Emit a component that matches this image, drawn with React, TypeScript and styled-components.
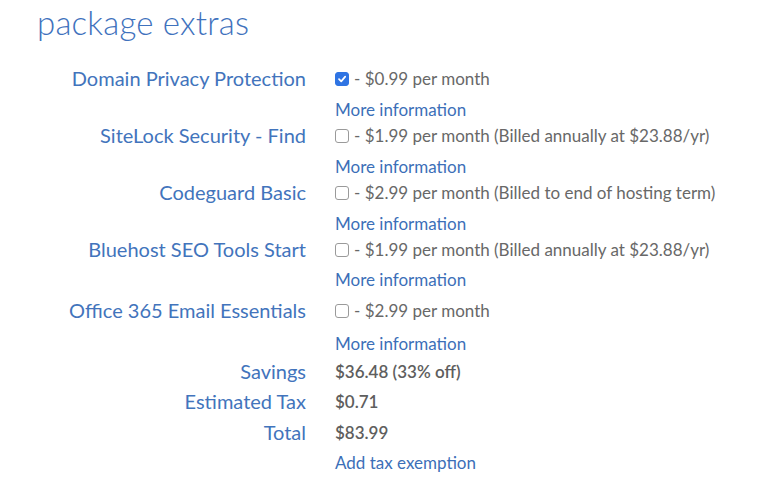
import React from "react";
import styled, { createGlobalStyle } from "styled-components";

const Global = createGlobalStyle`
  html, body { margin: 0; padding: 0; background: #ffffff; }
  body { font-family: "Lato", "Open Sans", sans-serif; }
`;

const Page = styled.div`
  width: 774px;
  height: 490px;
  overflow: hidden;
  padding: 1px 0 0 37px;
  box-sizing: border-box;
`;

const Title = styled.h2`
  margin: 0;
  font-size: 33px;
  font-weight: 300;
  color: #3f72bd;
  line-height: 42px;
  letter-spacing: 0.2px;
`;

const Grid = styled.div`
  display: grid;
  grid-template-columns: 269px auto;
  column-gap: 29px;
  margin-top: 20px;
`;

const Label = styled.div<{ $h: number }>`
  height: ${(p) => p.$h}px;
  line-height: ${(p) => p.$h}px;
  text-align: right;
  font-size: 20px;
  font-weight: 400;
  color: #4274bc;
  white-space: nowrap;
`;

const Value = styled.div<{ $h: number; $pad?: number }>`
  height: ${(p) => p.$h}px;
  box-sizing: border-box;
  padding-top: ${(p) => p.$pad ?? 0}px;
  display: flex;
  align-items: center;
  font-size: 17px;
  color: #686868;
  white-space: nowrap;
`;

const Box = styled.span<{ $checked?: boolean }>`
  width: 14px;
  height: 14px;
  box-sizing: border-box;
  border-radius: 3px;
  border: 1px solid ${(p) => (p.$checked ? "#2f74e3" : "#9a9a9a")};
  background: ${(p) => (p.$checked ? "#2f74e3" : "#fff")};
  display: inline-flex;
  align-items: center;
  justify-content: center;
  margin-right: 5px;
  margin-top: 2px;
`;

const Link = styled.a`
  font-size: 17px;
  color: #3c6fb8;
  text-decoration: none;
`;

const Strong = styled.span`
  font-weight: 600;
  color: #5e5e5e;
`;

type Extra = { name: string; price: string; checked?: boolean };

const extras: Extra[] = [
  { name: "Domain Privacy Protection", price: "- $0.99 per month", checked: true },
  { name: "SiteLock Security - Find", price: "- $1.99 per month (Billed annually at $23.88/yr)" },
  { name: "Codeguard Basic", price: "- $2.99 per month (Billed to end of hosting term)" },
  { name: "Bluehost SEO Tools Start", price: "- $1.99 per month (Billed annually at $23.88/yr)" },
  { name: "Office 365 Email Essentials", price: "- $2.99 per month" },
];

const summary: { label: string; value: string; h: number }[] = [
  { label: "Savings", value: "$36.48 (33% off)", h: 30 },
  { label: "Estimated Tax", value: "$0.71", h: 31 },
  { label: "Total", value: "$83.99", h: 30 },
];

const Check = () => (
  <svg width="10" height="10" viewBox="0 0 10 10">
    <path d="M2 5.2 L4.2 7.4 L8.2 2.6" fill="none" stroke="#fff" strokeWidth="1.7" strokeLinecap="round" strokeLinejoin="round" />
  </svg>
);

export default function App() {
  return (
    <>
      <Global />
      <Page>
        <Title>package extras</Title>
        <Grid>
          {extras.map((e, i) => {
            const infoH = i === 3 ? 31 : i === 4 ? 31 : 27;
            return (
              <React.Fragment key={e.name}>
                <Label $h={30}>{e.name}</Label>
                <Value $h={30}>
                  <Box $checked={e.checked}>{e.checked && <Check />}</Box>
                  {e.price}
                </Value>
                <Label $h={infoH} />
                <Value $h={infoH} $pad={i === 3 ? 0 : 5}>
                  <Link href="#">More information</Link>
                </Value>
              </React.Fragment>
            );
          })}
          {summary.map((s) => (
            <React.Fragment key={s.label}>
              <Label $h={s.h}>{s.label}</Label>
              <Value $h={s.h}>
                <Strong>{s.value}</Strong>
              </Value>
            </React.Fragment>
          ))}
          <Label $h={30} />
          <Value $h={30}>
            <Link href="#">Add tax exemption</Link>
          </Value>
        </Grid>
      </Page>
    </>
  );
}
